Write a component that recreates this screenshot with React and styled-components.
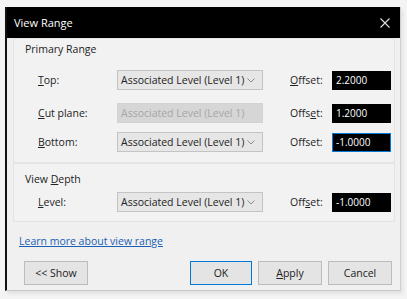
import React from "react";
import styled, { createGlobalStyle } from "styled-components";

const GlobalStyle = createGlobalStyle`
  html, body {
    margin: 0;
    padding: 0;
    background: #f4f4f4;
    font-family: "Open Sans", "Noto Sans", sans-serif;
    font-size: 10.5px;
    color: #222;
  }
`;

const Page = styled.div`
  width: 407px;
  height: 299px;
  padding: 7px 0 0 5px;
  box-sizing: border-box;
`;

const Window = styled.div`
  width: 396px;
  height: 284px;
  background: #f0f0f0;
  border-left: 2px solid #111;
  border-right: 1px solid #d0d0d0;
  border-bottom: 1px solid #c8c8c8;
  box-sizing: border-box;
  display: flex;
  flex-direction: column;
  box-shadow: 2px 3px 4px rgba(0, 0, 0, 0.08);
`;

const TitleBar = styled.div`
  height: 31px;
  background: #000;
  color: #fff;
  display: flex;
  align-items: center;
  justify-content: space-between;
  padding: 0 10px 0 7px;
  font-size: 11px;
  flex-shrink: 0;
`;

const CloseIcon = styled.svg`
  width: 10px;
  height: 10px;
`;

const Body = styled.div`
  flex: 1;
  display: flex;
  flex-direction: column;
  padding: 0 5px 0 6px;
`;

const Group = styled.div`
  border: 1px solid #e4e4e4;
  background: #f2f2f2;
  padding: ${p => p.$pad};
  display: flex;
  flex-direction: column;
`;

const GroupTitle = styled.div`
  padding-left: 11px;
  height: 16px;
  line-height: 16px;
`;

const Row = styled.div`
  display: grid;
  grid-template-columns: 79px 146px 29px 40px 59px;
  align-items: center;
  height: ${p => p.$h}px;
  margin-top: ${p => p.$mt || 0}px;
  padding-left: 24px;
`;

const Label = styled.span`
  color: #222;
`;

const OffsetLabel = styled.span`
  grid-column: 4;
  margin-left: -2px;
`;

const Combo = styled.div`
  height: 20px;
  box-sizing: border-box;
  border: 1px solid ${p => (p.$disabled ? "#d2d2d2" : "#c4c4c4")};
  background: ${p => (p.$disabled ? "#d6d6d6" : "#e6e6e6")};
  color: ${p => (p.$disabled ? "#a6a6a6" : "#222")};
  display: flex;
  align-items: center;
  justify-content: space-between;
  padding: 0 7px 0 3px;
  white-space: nowrap;
`;

const Chevron = styled.svg`
  width: 8px;
  height: 5px;
`;

const OffsetInput = styled.div`
  grid-column: 5;
  height: 19px;
  box-sizing: border-box;
  background: #000;
  color: #fff;
  border: 1px solid ${p => (p.$focus ? "#0078d7" : "#000")};
  display: flex;
  align-items: center;
  padding-left: 3px;
  font-size: 10px;
`;

const Link = styled.a`
  color: #1a5fb4;
  text-decoration: underline;
  margin-top: 11px;
  padding-left: 6px;
  height: 16px;
  line-height: 16px;
`;

const Footer = styled.div`
  display: flex;
  align-items: center;
  padding: 12px 2px 0 11px;
  gap: 6px;
`;

const Button = styled.button`
  height: 24px;
  width: ${p => p.$w}px;
  box-sizing: border-box;
  background: #e4e4e4;
  border: 1px solid ${p => (p.$primary ? "#0078d7" : "#bcbcbc")};
  font-family: inherit;
  font-size: 10.5px;
  color: #222;
  padding: 0;
  margin-left: ${p => p.$ml || 0}px;
`;

const U = styled.span`
  text-decoration: underline;
`;

const chevron = (
  <Chevron viewBox="0 0 8 5">
    <path d="M0.5 0.5 L4 4 L7.5 0.5" fill="none" stroke="#8a8a8a" strokeWidth="1" />
  </Chevron>
);

const levelRow = (label, value, disabled, focus, h, mt, offsetLabel) => (
  <Row $h={h} $mt={mt}>
    <Label>{label}</Label>
    <Combo $disabled={disabled}>
      <span>Associated Level (Level 1)</span>
      {!disabled && chevron}
    </Combo>
    <span />
    <OffsetLabel>{offsetLabel}</OffsetLabel>
    <OffsetInput $focus={focus}>{value}</OffsetInput>
  </Row>
);

export default function App() {
  return (
    <Page>
      <GlobalStyle />
      <Window>
        <TitleBar>
          <span>View Range</span>
          <CloseIcon viewBox="0 0 10 10">
            <path d="M0.5 0.5 L9.5 9.5 M9.5 0.5 L0.5 9.5" stroke="#e0e0e0" strokeWidth="1.1" />
          </CloseIcon>
        </TitleBar>
        <Body>
          <Group $pad="2px 0 8px 0">
            <GroupTitle>Primary Range</GroupTitle>
            {levelRow(<><U>T</U>op:</>, "2.2000", false, false, 32, 7, <><U>O</U>ffset:</>)}
            {levelRow(<><U>C</U>ut plane:</>, "1.2000", true, false, 34, 0, <>Offs<U>e</U>t:</>)}
            {levelRow(<><U>B</U>ottom:</>, "-1.0000", false, true, 24, 0, <>Offset:</>)}
          </Group>
          <Group $pad="7px 0 4px 0">
            <GroupTitle>View <U>D</U>epth</GroupTitle>
            {levelRow(<><U>L</U>evel:</>, "-1.0000", false, false, 30, 0, <>Off<U>s</U>et:</>)}
          </Group>
          <Link href="#">Learn more about view range</Link>
          <Footer>
            <Button $w={64}>&lt;&lt; Show</Button>
            <Button $w={62} $primary $ml={96}>OK</Button>
            <Button $w={64}><U>A</U>pply</Button>
            <Button $w={64}>Cancel</Button>
          </Footer>
        </Body>
      </Window>
    </Page>
  );
}
